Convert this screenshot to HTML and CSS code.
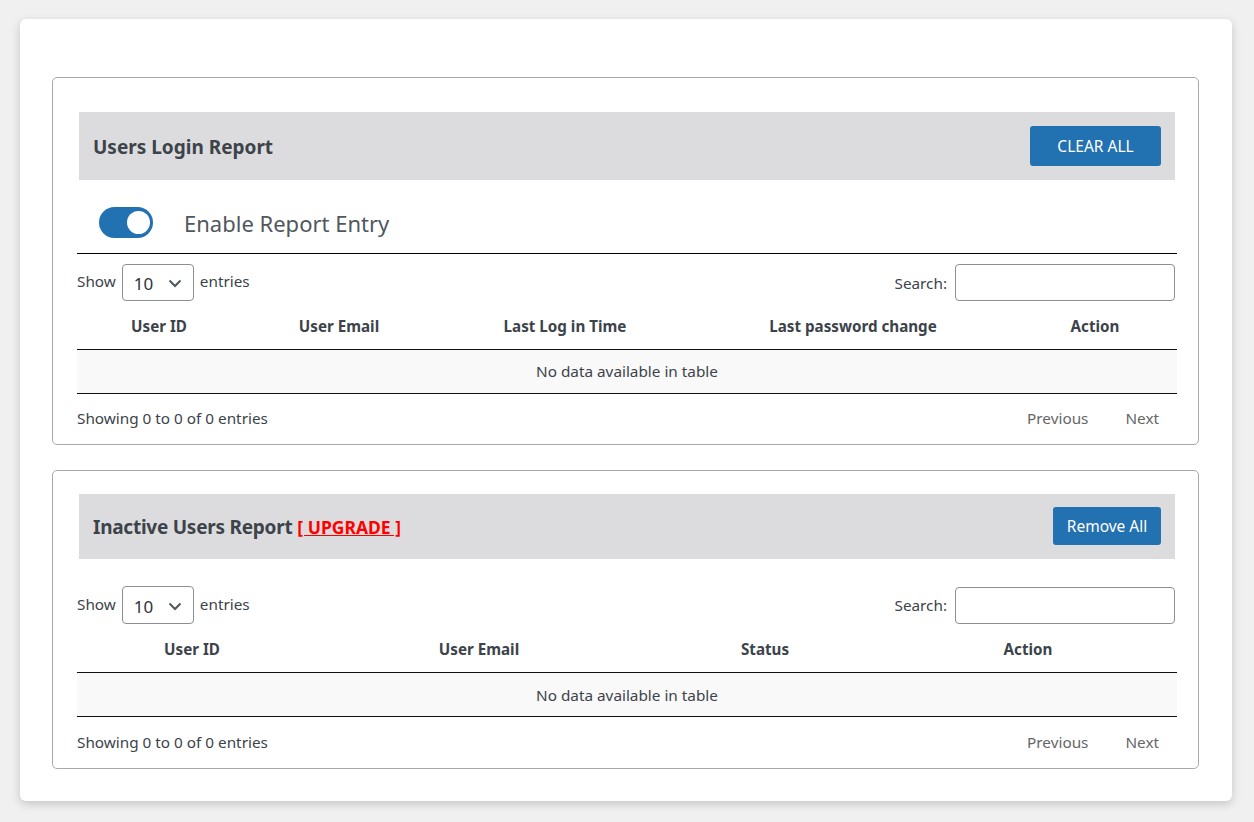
FILE: index.html
```html
<!DOCTYPE html>
<html>
<head>
<meta charset="utf-8">
<link rel="stylesheet" href="styles.css">
</head>
<body>
<div class="page">
  <div class="card">
    <section class="panel panel-login">
      <div class="panel-head">
        <h2 class="panel-title">Users Login Report</h2>
        <button class="btn btn-upper">CLEAR ALL</button>
      </div>
      <div class="toggle-row">
        <span class="switch"><span class="knob"></span></span>
        <span class="toggle-label">Enable Report Entry</span>
      </div>
      <div class="controls">
        <label class="length">Show <span class="select"><span class="select-val">10</span><svg class="chev" width="14" height="9" viewBox="0 0 14 9"><path d="M1.5 1.5 L7 7 L12.5 1.5" fill="none" stroke="#50575e" stroke-width="2"/></svg></span> entries</label>
        <label class="search">Search: <span class="search-input"></span></label>
      </div>
      <table class="data">
        <colgroup><col class="c1a"><col class="c1b"><col class="c1c"><col class="c1d"><col class="c1e"></colgroup>
        <thead><tr><th>User ID</th><th>User Email</th><th>Last Log in Time</th><th>Last password change</th><th>Action</th></tr></thead>
        <tbody><tr><td colspan="5">No data available in table</td></tr></tbody>
      </table>
      <div class="foot">
        <span class="info">Showing 0 to 0 of 0 entries</span>
        <span class="pager"><span class="pg">Previous</span><span class="pg">Next</span></span>
      </div>
    </section>

    <section class="panel panel-inactive">
      <div class="panel-head head-2">
        <h2 class="panel-title"><span class="tight">Inactive Users Report</span> <a class="upgrade" href="#">[ UPGRADE ]</a></h2>
        <button class="btn btn-small">Remove All</button>
      </div>
      <div class="controls controls-2">
        <label class="length">Show <span class="select sel-2"><span class="select-val">10</span><svg class="chev" width="14" height="9" viewBox="0 0 14 9"><path d="M1.5 1.5 L7 7 L12.5 1.5" fill="none" stroke="#50575e" stroke-width="2"/></svg></span> entries</label>
        <label class="search">Search: <span class="search-input"></span></label>
      </div>
      <table class="data">
        <colgroup><col class="c2a"><col class="c2b"><col class="c2c"><col class="c2d"></colgroup>
        <thead><tr><th>User ID</th><th>User Email</th><th>Status</th><th>Action</th></tr></thead>
        <tbody><tr><td colspan="4">No data available in table</td></tr></tbody>
      </table>
      <div class="foot foot-2">
        <span class="info">Showing 0 to 0 of 0 entries</span>
        <span class="pager"><span class="pg">Previous</span><span class="pg">Next</span></span>
      </div>
    </section>
  </div>
</div>
</body>
</html>
```
FILE: styles.css
```css
* { box-sizing: border-box; }
html, body { margin: 0; padding: 0; }
body {
  background: #f0f0f1;
  font-family: "Noto Sans", "Open Sans", sans-serif;
  color: #3c434a;
  font-size: 15.3px;
}
.page { padding: 19px 22px 21px 20px; }
.card {
  background: #fff;
  border-radius: 6px;
  box-shadow: 0 3px 10px rgba(0,0,0,0.18);
  padding: 58px 33px 33px 32px;
  height: 782px;
}
.panel {
  border: 1px solid #a7aaad;
  border-radius: 5px;
  padding: 34px 21px 0 24px;
}
.panel-inactive { margin-top: 25px; padding-top: 23px; }
.panel-head {
  display: flex;
  align-items: center;
  justify-content: space-between;
  background: #dcdcde;
  height: 68px;
  margin: 0 2px 0 2px;
  padding: 1px 14px 0;
}
.head-2 { height: 65px; }
.panel-title {
  margin: 0;
  font-size: 19px;
  font-weight: 700;
  color: #3c434a;
}
.tight { letter-spacing: -0.25px; }
.upgrade { color: #ff0000; text-decoration: underline; font-size: 17.5px; }
.btn {
  background: #2271b1;
  color: #fff;
  border: none;
  border-radius: 3px;
  font-family: inherit;
  font-size: 15.5px;
  padding: 0;
  margin-top: -1px;
}
.btn-upper { width: 131px; height: 40px; }
.btn-small { width: 108px; height: 38px; }
.toggle-row {
  display: flex;
  align-items: center;
  height: 74px;
  padding: 12px 0 0 22px;
  border-bottom: 1px solid #000;
}
.switch {
  position: relative;
  display: inline-block;
  width: 54px;
  height: 31px;
  border-radius: 16px;
  background: #2271b1;
}
.knob {
  position: absolute;
  right: 3px;
  top: 4px;
  width: 23px;
  height: 23px;
  border-radius: 50%;
  background: #fff;
}
.toggle-label {
  margin-left: 31px;
  font-size: 22px;
  color: #50575e;
}
.controls {
  display: flex;
  justify-content: space-between;
  align-items: center;
  padding-top: 10px;
  height: 47px;
}
.controls-2 { padding-top: 27px; height: 66px; }
.length { display: flex; align-items: center; margin-top: -3px; }
.select {
  display: inline-flex;
  align-items: center;
  justify-content: space-between;
  width: 72px;
  height: 37px;
  margin: 3px 6px 0 6px;
  padding: 2px 11px 0 11px;
  border: 1px solid #8c8f94;
  border-radius: 4px;
  font-size: 17px;
  color: #2c3338;
}
.sel-2 { height: 38px; }
.search { display: flex; align-items: center; }
.search-input {
  display: inline-block;
  width: 220px;
  height: 37px;
  margin-left: 8px;
  margin-right: 2px;
  border: 1px solid #8c8f94;
  border-radius: 4px;
}
.data {
  width: 100%;
  border-collapse: collapse;
  table-layout: fixed;
}
.data th {
  font-weight: 700;
  font-size: 15.2px;
  height: 48px;
  padding: 2px 0 0;
  border-bottom: 1px solid #111;
  text-align: center;
}
.data td {
  background: #f9f9f9;
  text-align: center;
  height: 44px;
  border-bottom: 1px solid #111;
  padding: 0;
}
.c1a { width: 164px; } .c1b { width: 196px; } .c1c { width: 256px; } .c1d { width: 320px; } .c1e { width: 164px; }
.c2a { width: 230px; } .c2b { width: 344px; } .c2c { width: 228px; } .c2d { width: 298px; }
.foot {
  display: flex;
  justify-content: space-between;
  align-items: center;
  height: 50px;
  padding-bottom: 1px;
}
.foot-2 { height: 51px; padding-bottom: 2px; }
.pager { display: flex; color: #666; }
.pg { padding: 0 18px; }
.pg:first-child { padding-right: 19px; }
```
